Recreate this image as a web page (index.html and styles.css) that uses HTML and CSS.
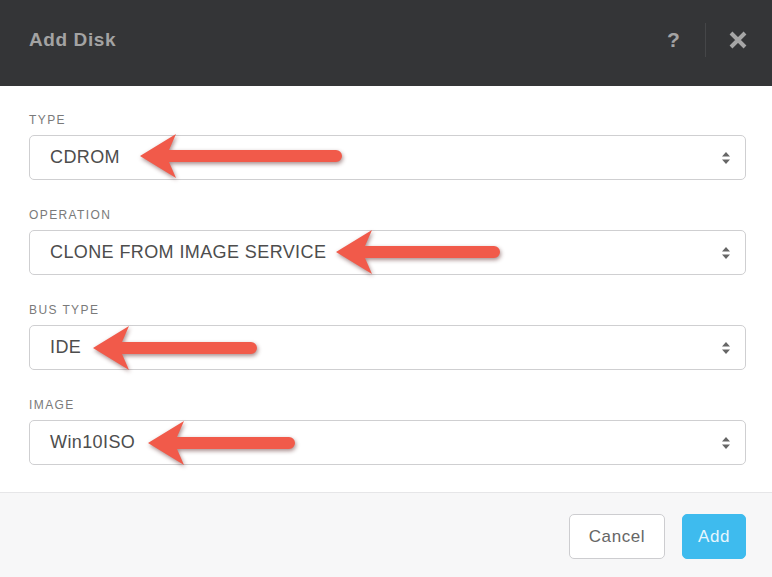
FILE: index.html
```html
<!DOCTYPE html>
<html>
<head>
<meta charset="utf-8">
<link rel="stylesheet" href="styles.css">
</head>
<body>
<div class="modal">
  <header class="modal-header">
    <h1 class="title">Add Disk</h1>
    <div class="header-actions">
      <span class="help">?</span>
      <span class="divider"></span>
      <svg class="close" width="20" height="20" viewBox="0 0 20 20"><path d="M3 3 L17 17 M17 3 L3 17" stroke="#a6a6a6" stroke-width="4" stroke-linecap="butt"/></svg>
    </div>
  </header>
  <main class="modal-body">
    <div class="field">
      <label class="label">TYPE</label>
      <div class="select">
        <span class="value">CDROM</span>
        <svg class="caret" width="10" height="14" viewBox="0 0 10 14"><path d="M5 1 L9 5.5 L1 5.5 Z M5 13 L9 8.5 L1 8.5 Z" fill="#666"/></svg>
        <svg class="arrow arrow-1" width="210" height="50" viewBox="0 0 210 50"><path d="M0 22 L36 0 L29 16 L196 16 A6 6 0 0 1 196 28 L29 28 L36 44 Z"/></svg>
      </div>
    </div>
    <div class="field">
      <label class="label">OPERATION</label>
      <div class="select">
        <span class="value">CLONE FROM IMAGE SERVICE</span>
        <svg class="caret" width="10" height="14" viewBox="0 0 10 14"><path d="M5 1 L9 5.5 L1 5.5 Z M5 13 L9 8.5 L1 8.5 Z" fill="#666"/></svg>
        <svg class="arrow arrow-2" width="172" height="50" viewBox="0 0 172 50"><path d="M0 22 L36 0 L29 16 L158 16 A6 6 0 0 1 158 28 L29 28 L36 44 Z"/></svg>
      </div>
    </div>
    <div class="field">
      <label class="label">BUS TYPE</label>
      <div class="select">
        <span class="value">IDE</span>
        <svg class="caret" width="10" height="14" viewBox="0 0 10 14"><path d="M5 1 L9 5.5 L1 5.5 Z M5 13 L9 8.5 L1 8.5 Z" fill="#666"/></svg>
        <svg class="arrow arrow-3" width="172" height="50" viewBox="0 0 172 50"><path d="M0 22 L36 0 L29 16 L158 16 A6 6 0 0 1 158 28 L29 28 L36 44 Z"/></svg>
      </div>
    </div>
    <div class="field">
      <label class="label">IMAGE</label>
      <div class="select">
        <span class="value">Win10ISO</span>
        <svg class="caret" width="10" height="14" viewBox="0 0 10 14"><path d="M5 1 L9 5.5 L1 5.5 Z M5 13 L9 8.5 L1 8.5 Z" fill="#666"/></svg>
        <svg class="arrow arrow-4" width="155" height="50" viewBox="0 0 155 50"><path d="M0 22 L36 0 L29 16 L141 16 A6 6 0 0 1 141 28 L29 28 L36 44 Z"/></svg>
      </div>
    </div>
  </main>
  <footer class="modal-footer">
    <button class="btn btn-cancel">Cancel</button>
    <button class="btn btn-add">Add</button>
  </footer>
</div>
</body>
</html>
```
FILE: styles.css
```css
* { box-sizing: border-box; }
html, body { margin: 0; padding: 0; }
body {
  width: 772px;
  height: 577px;
  overflow: hidden;
  font-family: "Liberation Sans", Arial, sans-serif;
  background: #ffffff;
}
.modal {
  display: flex;
  flex-direction: column;
  height: 577px;
}
.modal-header {
  flex-shrink: 0;
  height: 86px;
  background: #343537;
  display: flex;
  align-items: center;
  justify-content: space-between;
  padding: 0 24px 6px 29px;
}
.title {
  margin: 0;
  font-size: 19px;
  font-weight: bold;
  color: #a3a3a3;
  letter-spacing: 0.6px;
}
.header-actions {
  display: flex;
  align-items: center;
}
.help {
  font-size: 21px;
  font-weight: bold;
  color: #a3a3a3;
  width: 12px;
  text-align: center;
}
.divider {
  width: 1px;
  height: 34px;
  background: #454648;
  margin: 0 22px 0 26px;
}
.close { display: block; }
.modal-body {
  flex: 1;
  padding: 26px 26px 26px 29px;
  display: flex;
  flex-direction: column;
  gap: 27px;
}
.field {
  display: flex;
  flex-direction: column;
}
.label {
  font-size: 12px;
  line-height: 16px;
  color: #7a7a7a;
  letter-spacing: 1.4px;
  margin-bottom: 7px;
}
.select {
  position: relative;
  height: 45px;
  border: 1px solid #cfcfd1;
  border-radius: 5px;
  display: flex;
  align-items: center;
  justify-content: space-between;
  padding: 0 14px 0 20px;
}
.value {
  font-size: 18px;
  color: #4d4d4d;
  letter-spacing: 0.4px;
}
.caret { display: block; }
.arrow {
  position: absolute;
  overflow: visible;
  fill: #f15a4a;
  filter: drop-shadow(1px 2px 2px rgba(60, 0, 0, 0.45));
}
.arrow-1 { left: 110px; top: -2px; }
.arrow-2 { left: 306px; top: -1px; }
.arrow-3 { left: 63px; top: 0px; }
.arrow-4 { left: 118px; top: 0px; }
.modal-footer {
  flex-shrink: 0;
  height: 85px;
  border-top: 1px solid #e6e6e8;
  background: #f7f7f8;
  display: flex;
  justify-content: flex-end;
  align-items: flex-start;
  padding: 21px 26px 0 0;
  gap: 17px;
}
.btn {
  height: 45px;
  border-radius: 5px;
  font-family: "Liberation Sans", Arial, sans-serif;
  font-size: 17px;
  letter-spacing: 0.6px;
  cursor: pointer;
}
.btn-cancel {
  width: 96px;
  background: #ffffff;
  border: 1px solid #cdcdd0;
  color: #666666;
}
.btn-add {
  width: 64px;
  background: #3ebbee;
  border: 1px solid #3ebbee;
  color: #e6f6fd;
}
```
